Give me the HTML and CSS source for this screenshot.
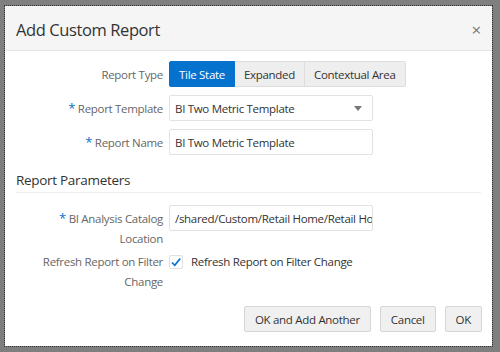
FILE: index.html
```html
<!DOCTYPE html>
<html>
<head>
  <meta charset="utf-8">
  <title>Add Custom Report</title>
  <link rel="stylesheet" href="styles.css">
</head>
<body>
  <div class="dialog">
    <div class="dialog-header">
      <h1 class="dialog-title">Add Custom Report</h1>
      <span class="close">&times;</span>
    </div>
    <div class="dialog-body">
      <div class="row">
        <label class="label">Report Type</label>
        <div class="btn-group">
          <span class="seg active">Tile State</span>
          <span class="seg">Expanded</span>
          <span class="seg">Contextual Area</span>
        </div>
      </div>
      <div class="row">
        <label class="label"><span class="req">*</span> Report Template</label>
        <div class="field select">
          <span>BI Two Metric Template</span>
          <span class="caret"></span>
        </div>
      </div>
      <div class="row">
        <label class="label"><span class="req">*</span> Report Name</label>
        <div class="field">BI Two Metric Template</div>
      </div>

      <h2 class="section">Report Parameters</h2>

      <div class="row top">
        <label class="label two-line"><span class="req">*</span> BI Analysis Catalog Location</label>
        <div class="field clip">/shared/Custom/Retail Home/Retail Home</div>
      </div>
      <div class="row top">
        <label class="label two-line">Refresh Report on Filter Change</label>
        <div class="check">
          <span class="box">
            <svg width="12" height="12" viewBox="0 0 12 12"><path d="M2 6.5 L4.8 9.3 L10.2 2.5" fill="none" stroke="#0572ce" stroke-width="1.7"/></svg>
          </span>
          <span>Refresh Report on Filter Change</span>
        </div>
      </div>
    </div>
    <div class="dialog-footer">
      <span class="btn">OK and Add Another</span>
      <span class="btn">Cancel</span>
      <span class="btn">OK</span>
    </div>
  </div>
</body>
</html>
```

FILE: styles.css
```css
html, body {
  margin: 0;
  height: 100%;
}
body {
  background: #7f7f7f;
  font-family: "Open Sans", "Noto Sans", sans-serif;
  font-size: 11.5px;
  letter-spacing: -0.3px;
  color: #333;
  padding: 6px 8px 6px 5px;
  box-sizing: border-box;
}
.dialog {
  width: 487px;
  height: 340px;
  background: #fff;
  outline: 1px dotted #333;
  display: flex;
  flex-direction: column;
  box-sizing: border-box;
}
.dialog-header {
  height: 45px;
  background: #f5f5f5;
  border-bottom: 1px solid #e3e3e3;
  display: flex;
  align-items: center;
  justify-content: space-between;
  padding: 0 11px 0 11px;
  box-sizing: border-box;
}
.dialog-title {
  margin: 0;
  font-size: 16.5px;
  letter-spacing: -0.4px;
  font-weight: normal;
  color: #333;
  padding-top: 3px;
}
.close {
  font-size: 17px;
  color: #777;
  padding-top: 2px;
}
.dialog-body {
  flex: 1;
  padding: 10px 11px 0 11px;
}
.row {
  display: flex;
  align-items: center;
  margin-bottom: 8px;
}
.row.top {
  align-items: flex-start;
  margin-bottom: 0;
}
.label {
  width: 147px;
  text-align: right;
  color: #666;
  padding-right: 6px;
  flex-shrink: 0;
}
.two-line {
  line-height: 20px;
  padding-top: 3px;
}
.req {
  color: #0572ce;
  font-size: 13px;
}
.btn-group {
  display: flex;
  height: 26px;
}
.seg {
  display: flex;
  align-items: center;
  padding: 0 9px;
  background: #eee;
  border: 1px solid #ddd;
  border-left: none;
  color: #333;
}
.seg:first-child {
  border-left: 1px solid #ddd;
  border-radius: 2px 0 0 2px;
}
.seg:last-child {
  border-radius: 0 2px 2px 0;
}
.seg.active {
  background: #0572ce;
  border-color: #0572ce;
  color: #fff;
}
.field {
  width: 204px;
  height: 26px;
  border: 1px solid #e2e2e2;
  border-radius: 2px;
  box-sizing: border-box;
  display: flex;
  align-items: center;
  padding: 0 5px;
  white-space: nowrap;
}
.clip {
  overflow: hidden;
}
.select {
  justify-content: space-between;
  padding-right: 10px;
}
.caret {
  width: 0;
  height: 0;
  border-left: 4px solid transparent;
  border-right: 4px solid transparent;
  border-top: 5px solid #777;
}
.section {
  margin: 16px 0 12px 0;
  font-size: 13.5px;
  letter-spacing: -0.3px;
  font-weight: normal;
  color: #333;
  padding-bottom: 3px;
  border-bottom: 1px solid #eee;
}
.check {
  display: flex;
  align-items: center;
  gap: 8px;
  padding-top: 5px;
}
.box {
  width: 12px;
  height: 12px;
  border: 1px solid #e0e0e0;
  border-radius: 2px;
  display: flex;
  align-items: center;
  justify-content: center;
}
.dialog-footer {
  display: flex;
  justify-content: flex-end;
  gap: 9px;
  padding: 0 10px 14px 0;
}
.btn {
  height: 26px;
  display: flex;
  align-items: center;
  padding: 0 10px;
  background: #f0f0f0;
  border: 1px solid #d6d6d6;
  border-radius: 2px;
  box-sizing: border-box;
  color: #333;
}
```
